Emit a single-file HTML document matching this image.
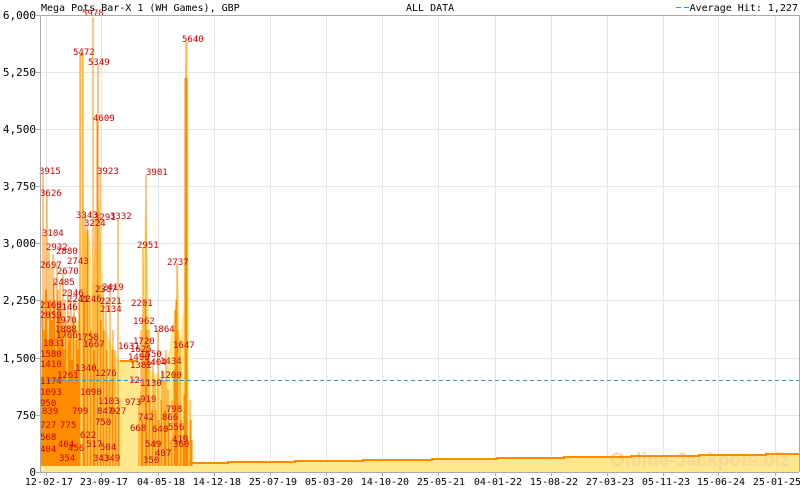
<!DOCTYPE html>
<html><head><meta charset="utf-8"><style>
html,body{margin:0;padding:0;background:#fff;width:800px;height:490px;overflow:hidden}
svg{display:block}
text{font-family:"DejaVu Sans Mono","Liberation Mono",monospace}
</style></head><body>
<svg width="800" height="490" viewBox="0 0 800 490" xmlns="http://www.w3.org/2000/svg">
<rect width="800" height="490" fill="#fff"/>
<g stroke="#e6e6e6" stroke-width="1">
<path d="M40 72.5H799M40 129.5H799M40 186.5H799M40 243.5H799M40 300.5H799M40 358.5H799M40 415.5H799"/>
<path d="M46.5 15V472M101.5 15V472M158.5 15V472M214.5 15V472M270.5 15V472M326.5 15V472M382.5 15V472M438.5 15V472M495.5 15V472M551.5 15V472M607.5 15V472M663.5 15V472M718.5 15V472M775.5 15V472"/>
</g>
<polygon fill="#fde98c" points="40,472 40,380 50,330 60,330 79,320 80,55 83,55 84,230 90,240 93,300 95,221 99,200 105,330 118,360 120,361 138,361 140,400 146,180 150,370 165,380 176,300 178,263 180,340 184,300 185,78 186,42 188,42 189,440 193,463 228,463 228,462 295,462 295,461 363,461 363,460 432,460 432,459 497,459 497,458 564,458 564,457 631,457 631,456 699,456 699,455 766,455 766,454 799,454 799,472"/>
<text x="610" y="466" font-weight="bold" font-size="19" fill="#f9d39a" opacity="0.85" style="font-family:'Liberation Sans',sans-serif">Online-Jackpots.biz</text>
<path fill="none" stroke="#ff8c00" stroke-width="1" d="
M41 466V380M42 466V300M43 466V174M44 466V330M45 466V236M46 466V290M47 466V196M48 466V340M49 466V250M50 466V300M51 466V267M52 466V320M53 466V254M54 466V280M55 466V300M56 466V350M57 466V262M58 466V290M59 466V310M60 466V283M61 466V300M62 466V330M63 466V270M64 466V350M65 466V300M66 466V320M67 466V380M68 466V290M69 466V340M70 466V330M71 466V300M72 466V360M73 466V320M74 466V300M75 466V370M76 466V340M77 466V330M78 466V350M79 466V300
M80 466V55M83 466V55M84 466V300M85 466V215M87 466V226M88 466V230M90 466V300M91 466V330M93 466V17M94 466V350M95 466V220M97 466V121M98 466V64M100 466V173M101 466V320M103 466V290M104 466V330M106 466V300M107 466V350M109 466V380M110 466V284M112 466V350M113 466V330M115 466V350M116 466V410M118 466V218M119 466V400
M139 466V400M141 466V330M142 466V420M143 466V247M145 466V300M146 466V175M147 466V330M149 466V330M150 466V400M152 466V410M153 466V360M155 466V380M156 466V410M158 466V330M159 466V420M161 466V400M162 466V370M164 466V380M165 466V410M166 466V350M168 466V390M169 466V410M171 466V440M172 466V400M174 466V370M175 466V310M176 466V300M177 466V263M178 466V330M180 466V340M181 466V420M183 466V435M184 466V395M185 466V78M186 466V42M187 466V78M188 466V440M190 466V400M191 466V420M192 466V440"/>
<path fill="none" stroke="#ff8c00" stroke-width="2" d="M80 55H83M120 361H138M189 463H228V462H295V461H363V460H432V459H497V458H564V457H631V456H699V455H766V454H799"/>
<path d="M40 380.5H799" stroke="#3399cc" stroke-width="1" stroke-dasharray="4,3"/>
<g fill="#cc0000" font-size="9">
<text x="82" y="16">5978</text><text x="73" y="55">5472</text><text x="88" y="65">5349</text><text x="182" y="42">5640</text>
<text x="93" y="121">4609</text><text x="39" y="174">3915</text><text x="97" y="174">3923</text><text x="146" y="175">3901</text>
<text x="40" y="196">3626</text><text x="76" y="218">3343</text><text x="84" y="226">3224</text><text x="94" y="220">3291</text><text x="110" y="219">3332</text>
<text x="42" y="236">3104</text><text x="46" y="250">2932</text><text x="56" y="254">2880</text><text x="137" y="248">2951</text>
<text x="67" y="264">2743</text><text x="40" y="268">2697</text><text x="57" y="274">2670</text><text x="167" y="265">2737</text>
<text x="53" y="285">2485</text><text x="62" y="296">2346</text><text x="102" y="290">2419</text><text x="95" y="292">2387</text>
<text x="67" y="302">2241</text><text x="80" y="302">2246</text><text x="100" y="304">2221</text><text x="131" y="306">2201</text>
<text x="40" y="308">2168</text><text x="56" y="310">2146</text><text x="100" y="312">2134</text><text x="40" y="318">2059</text>
<text x="55" y="323">1970</text><text x="133" y="324">1962</text><text x="55" y="332">1888</text><text x="153" y="332">1864</text>
<text x="43" y="346">1831</text><text x="77" y="340">1758</text><text x="56" y="338">1766</text><text x="118" y="349">1631</text><text x="133" y="344">1720</text>
<text x="40" y="357">1580</text><text x="83" y="347">1667</text><text x="130" y="352">1625</text><text x="140" y="357">1550</text><text x="173" y="348">1647</text>
<text x="40" y="367">1410</text><text x="75" y="371">1340</text><text x="128" y="360">1490</text><text x="130" y="368">1382</text>
<text x="57" y="378">1261</text><text x="95" y="376">1276</text><text x="145" y="365">1404</text><text x="160" y="364">1434</text>
<text x="40" y="384">1174</text><text x="98" y="404">1103</text><text x="140" y="386">1130</text><text x="160" y="378">1200</text>
<text x="40" y="395">1093</text><text x="80" y="395">1090</text><text x="40" y="406">950</text><text x="110" y="414">927</text><text x="140" y="402">919</text>
<text x="42" y="414">839</text><text x="72" y="414">799</text><text x="97" y="414">847</text><text x="125" y="405">973</text><text x="166" y="412">798</text>
<text x="40" y="428">727</text><text x="60" y="428">775</text><text x="95" y="425">750</text><text x="138" y="420">742</text><text x="162" y="420">866</text>
<text x="40" y="440">568</text><text x="80" y="438">622</text><text x="130" y="431">668</text><text x="152" y="432">640</text><text x="168" y="430">556</text>
<text x="40" y="452">404</text><text x="68" y="451">456</text><text x="86" y="447">517</text><text x="100" y="450">504</text><text x="145" y="447">549</text><text x="172" y="442">419</text>
<text x="58" y="447">404</text><text x="59" y="461">354</text><text x="93" y="461">343</text><text x="104" y="461">349</text><text x="143" y="463">350</text><text x="155" y="456">407</text><text x="173" y="447">360</text>
<text x="129" y="383">12</text>
</g>
<path d="M40.5 15V472M40 15.5H799M40 472.5H799M799.5 15V472" stroke="#aaaaaa" stroke-width="1" fill="none"/>
<path stroke="#aaaaaa" d="M36 15.5H40M36 72.5H40M36 129.5H40M36 186.5H40M36 243.5H40M36 300.5H40M36 358.5H40M36 415.5H40M36 472.5H40"/>
<path stroke="#aaaaaa" d="M46.5 472V476M101.5 472V476M158.5 472V476M214.5 472V476M270.5 472V476M326.5 472V476M382.5 472V476M438.5 472V476M495.5 472V476M551.5 472V476M607.5 472V476M663.5 472V476M718.5 472V476M775.5 472V476"/>
<g font-size="11" fill="#000" text-anchor="end">
<text x="36" y="19">6,000</text><text x="36" y="76">5,250</text><text x="36" y="133">4,500</text><text x="36" y="190">3,750</text><text x="36" y="247">3,000</text><text x="36" y="304">2,250</text><text x="36" y="362">1,500</text><text x="36" y="419">750</text><text x="36" y="476">0</text>
</g>
<g font-size="10" fill="#000" text-anchor="middle">
<text x="49" y="485">12-02-17</text><text x="104" y="485">23-09-17</text><text x="161" y="485">04-05-18</text><text x="217" y="485">14-12-18</text><text x="273" y="485">25-07-19</text><text x="329" y="485">05-03-20</text><text x="385" y="485">14-10-20</text><text x="441" y="485">25-05-21</text><text x="498" y="485">04-01-22</text><text x="554" y="485">15-08-22</text><text x="610" y="485">27-03-23</text><text x="666" y="485">05-11-23</text><text x="721" y="485">15-06-24</text><text x="777" y="485">25-01-25</text>
</g>
<g font-size="10" fill="#000">
<text x="41" y="11">Mega Pots Bar-X 1 (WH Games), GBP</text>
<text x="406" y="11">ALL DATA</text>
<text x="798" y="11" text-anchor="end">Average Hit: 1,227</text>
</g>
<path d="M676 7.5H681M684 7.5H689" stroke="#3399cc"/>
</svg>
</body></html>
